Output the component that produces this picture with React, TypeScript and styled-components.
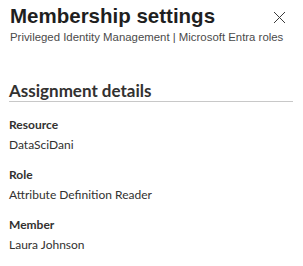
import styled, { createGlobalStyle } from 'styled-components';

const GlobalStyle = createGlobalStyle`
  body {
    margin: 0;
    background: #ffffff;
  }
`;

const fields = [
  { label: 'Resource', value: 'DataSciDani' },
  { label: 'Role', value: 'Attribute Definition Reader' },
  { label: 'Member', value: 'Laura Johnson' },
];

const App = () => {
  return (
    <Panel>
      <GlobalStyle />
      <Header>
        <TitleRow>
          <Title>Membership settings</Title>
          <CloseButton aria-label="Close">
            <svg width="13" height="13" viewBox="0 0 13 13">
              <path d="M1 1 L12 12 M12 1 L1 12" stroke="#3b3b3b" strokeWidth="1" fill="none" />
            </svg>
          </CloseButton>
        </TitleRow>
        <Subtitle>Privileged Identity Management | Microsoft Entra roles</Subtitle>
      </Header>
      <Section>
        <SectionTitle>Assignment details</SectionTitle>
        {fields.map((f) => (
          <Field key={f.label}>
            <Label>{f.label}</Label>
            <Value>{f.value}</Value>
          </Field>
        ))}
      </Section>
    </Panel>
  );
};

export default App;

const Panel = styled.div`
  width: 303px;
  height: 266px;
  padding: 4px 10px 0 9px;
  box-sizing: border-box;
  background: #ffffff;
  font-family: Lato, 'Open Sans', sans-serif;
  color: #323130;
`;

const Header = styled.div`
  display: flex;
  flex-direction: column;
`;

const TitleRow = styled.div`
  display: flex;
  justify-content: space-between;
  align-items: flex-start;
`;

const Title = styled.div`
  font-family: 'Liberation Sans', Arial, sans-serif;
  font-weight: 700;
  font-size: 20.5px;
  line-height: 24px;
  color: #1f1f1f;
  padding-left: 1px;
`;

const Subtitle = styled.div`
  font-family: 'Liberation Sans', Arial, sans-serif;
  font-size: 11.4px;
  line-height: 16px;
  margin-top: 1px;
  padding-left: 1px;
  white-space: nowrap;
  color: #4a4a4a;
`;

const CloseButton = styled.button`
  border: none;
  background: none;
  padding: 0;
  margin: 7px 7px 0 0;
  display: flex;
  cursor: pointer;
`;

const Section = styled.div`
  margin-top: 35px;
`;

const SectionTitle = styled.div`
  font-size: 17px;
  font-weight: 700;
  line-height: 21px;
  color: #323130;
  border-bottom: 1px solid #c8c8c8;
  margin-bottom: 13px;
`;

const Field = styled.div`
  display: flex;
  flex-direction: column;
  margin-bottom: 10px;
`;

const Label = styled.div`
  font-size: 12px;
  font-weight: 700;
  line-height: 20px;
  color: #323130;
`;

const Value = styled.div`
  font-size: 12px;
  line-height: 20px;
  color: #323130;
`;
